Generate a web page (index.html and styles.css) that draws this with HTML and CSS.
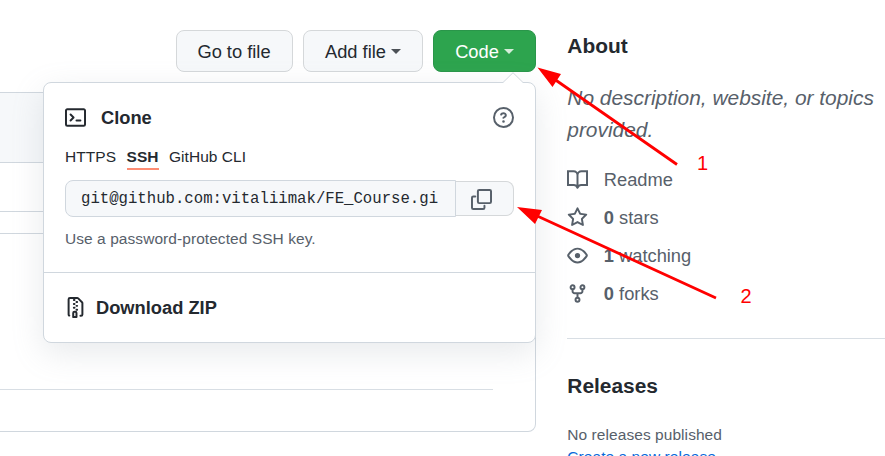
FILE: index.html
```html
<!DOCTYPE html>
<html lang="en">
<head>
<meta charset="utf-8">
<title>Repository</title>
<link rel="stylesheet" href="styles.css">
</head>
<body>
<div class="page">
  <main class="main">
    <div class="toolbar">
      <button class="btn btn-go">Go to file</button>
      <button class="btn btn-add">Add file<span class="caret"></span></button>
      <button class="btn btn-code">Code<span class="caret"></span></button>
    </div>
    <section class="files"><div class="files-head"></div></section>
    <section class="readme"><div class="readme-rule"></div></section>
    <div class="popover">
      <div class="clone">
        <div class="clone-head">
          <svg class="icon dark" viewBox="0 0 16 16"><path d="M0 2.75C0 1.784.784 1 1.75 1h12.5c.966 0 1.75.784 1.75 1.75v10.5A1.75 1.75 0 0114.25 15H1.75A1.75 1.75 0 010 13.25V2.75zm1.75-.25a.25.25 0 00-.25.25v10.5c0 .138.112.25.25.25h12.5a.25.25 0 00.25-.25V2.75a.25.25 0 00-.25-.25H1.75zM7.25 8a.75.75 0 01-.22.53l-2.25 2.25a.75.75 0 11-1.06-1.06L5.44 8 3.72 6.28a.75.75 0 111.06-1.06l2.25 2.25c.141.14.22.331.22.53zm1.5 1.5a.75.75 0 000 1.5h3a.75.75 0 000-1.5h-3z"/></svg>
          <strong>Clone</strong>
          <svg class="icon help" viewBox="0 0 16 16"><path d="M8 1.5a6.5 6.5 0 100 13 6.5 6.5 0 000-13zM0 8a8 8 0 1116 0A8 8 0 010 8zm9 3a1 1 0 11-2 0 1 1 0 012 0zM6.92 6.085c.081-.16.19-.299.34-.398.145-.097.371-.187.74-.187.28 0 .553.087.738.225A.613.613 0 019 6.25c0 .177-.04.264-.077.318a.956.956 0 01-.277.245c-.076.051-.158.1-.258.161l-.007.004a7.728 7.728 0 00-.313.195 2.416 2.416 0 00-.692.661.75.75 0 001.248.832.956.956 0 01.276-.245 6.3 6.3 0 01.26-.16l.006-.004c.093-.057.204-.123.313-.195.222-.149.487-.355.692-.662.214-.32.329-.702.329-1.15 0-.76-.36-1.348-.863-1.725A2.76 2.76 0 008 4c-.631 0-1.155.16-1.572.438-.413.276-.68.638-.849.977a.75.75 0 001.342.67z"/></svg>
        </div>
        <div class="tabs"><span>HTTPS</span><span class="tab-on">SSH</span><span>GitHub CLI</span></div>
        <div class="url-row">
          <div class="url">git@github.com:vitaliimak/FE_Course.gi</div>
          <button class="copy"><svg class="icon" viewBox="0 0 16 16"><path class="stroke" d="M6.25.75h8a1 1 0 0 1 1 1v8a1 1 0 0 1-1 1h-8a1 1 0 0 1-1-1v-8a1 1 0 0 1 1-1zM3.25 5.75h-1.500a1 1 0 0 0-1 1v7.500a1 1 0 0 0 1 1h7.500a1 1 0 0 0 1-1v-1.500"/></svg></button>
        </div>
        <p class="hint">Use a password-protected SSH key.</p>
      </div>
      <div class="download">
        <svg class="icon dark" viewBox="0 0 16 16"><path d="M3.5 1.75a.25.25 0 01.25-.25h3a.75.75 0 000 1.5h.5a.75.75 0 000-1.5h2.086a.25.25 0 01.177.073l2.914 2.914a.25.25 0 01.073.177v8.586a.25.25 0 01-.25.25h-.5a.75.75 0 000 1.5h.5A1.75 1.75 0 0014 13.25V4.664c0-.464-.184-.909-.513-1.237L10.573.513A1.75 1.75 0 009.336 0H3.75A1.75 1.75 0 002 1.75v11.5c0 .649.353 1.214.874 1.515a.75.75 0 10.752-1.298.25.25 0 01-.126-.217V1.75zM8.75 3a.75.75 0 000 1.5h.5a.75.75 0 000-1.5h-.5zM6 5.25a.75.75 0 01.75-.75h.5a.75.75 0 010 1.5h-.5A.75.75 0 016 5.25zm2 1.5A.75.75 0 018.75 6h.5a.75.75 0 010 1.5h-.5A.75.75 0 018 6.75zm-1.25.75a.75.75 0 000 1.5h.5a.75.75 0 000-1.5h-.5zM8 9.75A.75.75 0 018.75 9h.5a.75.75 0 010 1.5h-.5A.75.75 0 018 9.75zm-.75.75a1.75 1.75 0 00-1.75 1.75v3c0 .414.336.75.75.75h2.5a.75.75 0 00.75-.75v-3a1.75 1.75 0 00-1.75-1.75h-.5zM7 12.25a.25.25 0 01.25-.25h.5a.25.25 0 01.25.25v2.25H7v-2.25z"/></svg>
        <strong>Download ZIP</strong>
      </div>
      <svg class="notch" viewBox="0 0 22 11"><path d="M1 10.500L11 .5L21 10.500V11H1z" fill="#fff"/><path d="M0 10.500h1L11 .7L21 10.500h1" fill="none" stroke="#d0d7de"/></svg>
    </div>
  </main>
  <aside class="side">
    <h2>About</h2>
    <p class="desc">No description, website, or topics provided.</p>
    <ul class="meta">
      <li><svg class="icon" viewBox="0 0 16 16"><path class="stroke" d="M8 14.300C7.300 12.800 6.500 12.250 5.250 12.250H.75V1.750H5C6.700 1.750 8 3 8 4.750C8 3 9.300 1.750 11 1.750h4.250v10.500h-4.500C9.500 12.250 8.700 12.800 8 14.300V4.750"/></svg><span>Readme</span></li>
      <li><svg class="icon" viewBox="0 0 16 16"><path d="M8 .25a.75.75 0 01.673.418l1.882 3.815 4.21.612a.75.75 0 01.416 1.279l-3.046 2.97.719 4.192a.75.75 0 01-1.088.791L8 12.347l-3.766 1.98a.75.75 0 01-1.088-.79l.72-4.194L.818 6.374a.75.75 0 01.416-1.28l4.21-.611L7.327.668A.75.75 0 018 .25zm0 2.445L6.615 5.5a.75.75 0 01-.564.41l-3.097.45 2.24 2.184a.75.75 0 01.216.664l-.528 3.084 2.769-1.456a.75.75 0 01.698 0l2.77 1.456-.53-3.084a.75.75 0 01.216-.664l2.24-2.183-3.096-.45a.75.75 0 01-.564-.41L8 2.694z"/></svg><span><b>0</b> stars</span></li>
      <li><svg class="icon" viewBox="0 0 16 16"><path d="M1.679 7.932c.412-.621 1.242-1.75 2.366-2.717C5.175 4.242 6.527 3.5 8 3.5c1.473 0 2.824.742 3.955 1.715 1.124.967 1.954 2.096 2.366 2.717a.119.119 0 010 .136c-.412.621-1.242 1.75-2.366 2.717C10.825 11.758 9.473 12.5 8 12.5c-1.473 0-2.824-.742-3.955-1.715C2.92 9.818 2.09 8.69 1.679 8.068a.119.119 0 010-.136zM8 2c-1.981 0-3.67.992-4.933 2.078C1.797 5.169.88 6.423.43 7.1a1.619 1.619 0 000 1.798c.45.678 1.367 1.932 2.637 3.024C4.329 13.008 6.019 14 8 14c1.981 0 3.67-.992 4.933-2.078 1.27-1.091 2.187-2.345 2.637-3.023a1.619 1.619 0 000-1.798c-.45-.678-1.367-1.932-2.637-3.023C11.671 2.992 9.981 2 8 2zm0 8a2 2 0 100-4 2 2 0 000 4z"/></svg><span><b>1</b> watching</span></li>
      <li><svg class="icon" viewBox="0 0 16 16"><g class="stroke"><circle cx="4.250" cy="3.250" r="1.500"/><circle cx="11.750" cy="3.250" r="1.500"/><circle cx="8" cy="12.750" r="1.500"/><path d="M4.250 5v1.250a1.500 1.500 0 0 0 1.500 1.500h4.500a1.500 1.500 0 0 0 1.500-1.500V5M8 7.750V11"/></g></svg><span><b>0</b> forks</span></li>
    </ul>
    <h2 class="releases">Releases</h2>
    <p class="none">No releases published</p>
    <a class="create">Create a new release</a>
  </aside>
  <svg class="arrows" viewBox="0 0 885 456">
    <path d="M677 164.500L552 77.500M716 298L534 214.500" stroke="#f00" stroke-width="2.800"/>
    <path d="M537.500 67.500L561 74L552.500 87zM517 207L542 210L535 224z" fill="#f00"/>
  </svg>
  <span class="note note-one">1</span>
  <span class="note note-two">2</span>
</div>
</body>
</html>
```
FILE: styles.css
```css
* { box-sizing: border-box; }
body { margin: 0; font-family: "Liberation Sans", Arial, sans-serif; color: #24292f; background: #fff; }
.page { position: relative; width: 885px; height: 456px; overflow: hidden; display: grid; grid-template-columns: 536px 1fr; column-gap: 31.3px; }
.main { position: relative; padding-top: 30px; }
.toolbar { display: flex; justify-content: flex-end; gap: 10px; height: 42px; margin-bottom: 20px; }
.btn { font: 18.3px/24px "Liberation Sans", Arial, sans-serif; color: #24292f; background: #f6f8fa; border: 1px solid #d5d8da; border-radius: 8px; padding: 1px 0 0; display: flex; align-items: center; justify-content: center; white-space: nowrap; }
.btn-go { width: 117px; padding-right: 1px; }
.btn-add { width: 120px; }
.btn-code { width: 103px; color: #fff; background: #2da44e; border-color: #2a964a; }
.caret { margin-left: 5px; border: 5px solid transparent; border-top-color: #4c5157; border-bottom: 0; }
.btn-code .caret { border-top-color: #d5edda; }
.files { height: 120px; border: solid #d0d7de; border-width: 1px 1px 1px 0; border-radius: 0 8px 8px 0; overflow: hidden; }
.files-head { height: 70px; background: #f6f8fa; border-bottom: 1px solid #d0d7de; }
.readme { height: 199px; margin-top: 21px; padding-top: 155px; border: solid #d0d7de; border-width: 1px 1px 1px 0; border-radius: 0 8px 8px 0; }
.readme-rule { width: 493px; height: 1px; background: #d8dee4; }
.popover { position: absolute; left: 43px; top: 82px; width: 493px; height: 261px; background: #fff; border: 1px solid #d0d7de; border-radius: 8px; box-shadow: 0 10px 32px rgba(140,149,159,.2); }
.notch { position: absolute; top: -11px; right: 11px; width: 22px; height: 11px; }
.clone { height: 190px; padding: 24px 21px 0; border-bottom: 1px solid #d0d7de; }
.icon { width: 21px; height: 21px; fill: #57606a; flex: none; display: block; }
.dark { fill: #24292f; }
.stroke { fill: none; stroke: #57606a; stroke-width: 1.5; stroke-linecap: round; }
.clone-head { display: flex; align-items: center; height: 21px; font-size: 18.3px; }
.clone-head strong { margin-left: 15px; }
.help { margin-left: auto; }
.tabs { display: flex; gap: 10.5px; margin-top: 18px; height: 24px; font-size: 15.49px; line-height: 22px; letter-spacing: .05px; }
.tab-on { font-weight: bold; border-bottom: 2px solid #fd8c73; }
.url-row { display: flex; align-items: center; height: 37px; margin-top: 10px; }
.url { width: 391px; height: 37px; padding-left: 15px; background: #f6f8fa; border: 1px solid #d0d7de; border-radius: 8px 0 0 8px; font: 15.66px/36px "Liberation Mono", monospace; white-space: nowrap; }
.copy { flex: 1; height: 35px; padding: 1px 0 0 15px; background: #f6f8fa; border: 1px solid #d5d8da; border-left: 0; border-radius: 0 8px 8px 0; }
.hint { margin: 10px 0 0; font-size: 15.49px; line-height: 24px; letter-spacing: .07px; color: #57606a; }
.download { height: 69px; display: flex; align-items: center; padding-left: 21px; font-size: 18.3px; }
.download strong { margin-left: 10px; }
.side { padding-top: 32px; color: #57606a; }
h2 { margin: 0; color: #24292f; font-size: 20.9px; line-height: 28px; }
.desc { margin: 22px 0 0; font-size: 20.9px; line-height: 32px; font-style: italic; }
.meta { list-style: none; margin: 0; padding: 15px 0 25px; border-bottom: 1px solid #d8dee4; }
.meta li { display: flex; align-items: center; gap: 15.5px; height: 38px; font-size: 18.3px; }
.meta .icon { margin-bottom: 2px; }
.releases { margin-top: 33px; }
.none { margin: 23px 0 0; font-size: 15.49px; line-height: 24px; letter-spacing: .07px; }
.create { display: block; color: #0969da; font-size: 15.49px; line-height: 20px; letter-spacing: .07px; }
.arrows { position: absolute; inset: 0; width: 885px; height: 456px; pointer-events: none; }
.note { position: absolute; color: #f00; font-size: 20px; line-height: 24px; }
.note-one { left: 697px; top: 151px; }
.note-two { left: 740.5px; top: 284px; }
```
